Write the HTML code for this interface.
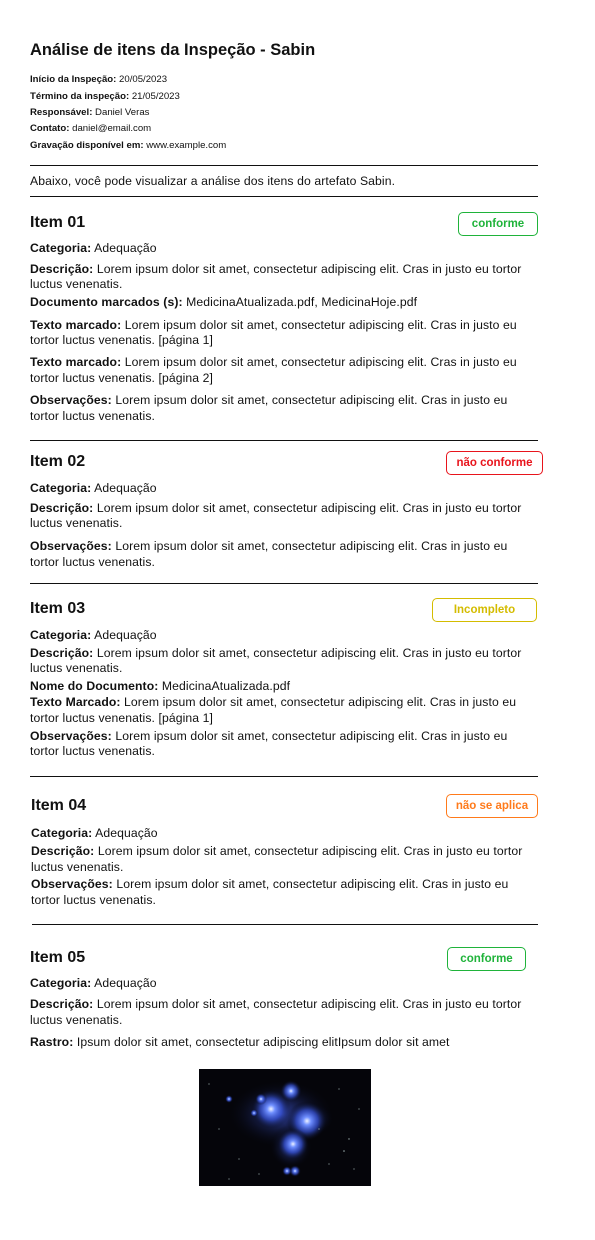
<!DOCTYPE html>
<html><head><meta charset="utf-8"><style>
body{margin:0;width:595px;height:1240px;background:#fff;position:relative;font-family:"Liberation Sans",Arial,sans-serif;color:#111;overflow:hidden}
.l{position:absolute;left:30px;white-space:nowrap;font-size:12.2px;line-height:16px;letter-spacing:0.1px}
.m{position:absolute;left:30px;white-space:nowrap;font-size:9.6px;line-height:14px}
.h{position:absolute;left:30px;font-size:16px;font-weight:bold;line-height:20px}
.t{position:absolute;left:30px;font-size:16.5px;font-weight:bold;line-height:22px}
.hr{position:absolute;left:30px;width:508px;height:1px;background:#111}
.b{position:absolute;border:1px solid;border-radius:5px;font-weight:bold;font-size:11.5px;display:flex;align-items:center;justify-content:center;box-sizing:border-box}
</style></head><body>
<div class="t" style="top:39px">Análise de itens da Inspeção - Sabin</div>
<div class="m" style="top:73px"><b>Início da Inspeção:</b> 20/05/2023</div>
<div class="m" style="top:90px"><b>Término da inspeção:</b> 21/05/2023</div>
<div class="m" style="top:106px"><b>Responsável:</b> Daniel Veras</div>
<div class="m" style="top:122px"><b>Contato:</b> daniel@email.com</div>
<div class="m" style="top:139px"><b>Gravação disponível em:</b> www.example.com</div>
<div class="hr" style="top:165px"></div>
<div class="l" style="top:173px">Abaixo, você pode visualizar a análise dos itens do artefato Sabin.</div>
<div class="hr" style="top:196px"></div>

<div class="h" style="top:213px">Item 01</div>
<div class="b" style="left:458px;top:212px;width:80px;height:24px;color:#1fb33a;border-color:#1fb33a">conforme</div>
<div class="l" style="top:240px"><b>Categoria:</b> Adequação</div>
<div class="l" style="top:261px"><b>Descrição:</b> Lorem ipsum dolor sit amet, consectetur adipiscing elit. Cras in justo eu tortor</div>
<div class="l" style="top:276px">luctus venenatis.</div>
<div class="l" style="top:294px"><b>Documento marcados (s):</b> MedicinaAtualizada.pdf, MedicinaHoje.pdf</div>
<div class="l" style="top:317px"><b>Texto marcado:</b> Lorem ipsum dolor sit amet, consectetur adipiscing elit. Cras in justo eu</div>
<div class="l" style="top:332px">tortor luctus venenatis. [página 1]</div>
<div class="l" style="top:354px"><b>Texto marcado:</b> Lorem ipsum dolor sit amet, consectetur adipiscing elit. Cras in justo eu</div>
<div class="l" style="top:370px">tortor luctus venenatis. [página 2]</div>
<div class="l" style="top:392px"><b>Observações:</b> Lorem ipsum dolor sit amet, consectetur adipiscing elit. Cras in justo eu</div>
<div class="l" style="top:408px">tortor luctus venenatis.</div>
<div class="hr" style="top:440px"></div>

<div class="h" style="top:452px">Item 02</div>
<div class="b" style="left:446px;top:451px;width:97px;height:24px;color:#e8141c;border-color:#e8141c">não conforme</div>
<div class="l" style="top:480px"><b>Categoria:</b> Adequação</div>
<div class="l" style="top:500px"><b>Descrição:</b> Lorem ipsum dolor sit amet, consectetur adipiscing elit. Cras in justo eu tortor</div>
<div class="l" style="top:515px">luctus venenatis.</div>
<div class="l" style="top:538px"><b>Observações:</b> Lorem ipsum dolor sit amet, consectetur adipiscing elit. Cras in justo eu</div>
<div class="l" style="top:554px">tortor luctus venenatis.</div>
<div class="hr" style="top:583px"></div>

<div class="h" style="top:599px">Item 03</div>
<div class="b" style="left:432px;top:598px;width:105px;height:24px;color:#d4bc00;border-color:#d4bc00">Incompleto</div>
<div class="l" style="top:627px"><b>Categoria:</b> Adequação</div>
<div class="l" style="top:645px"><b>Descrição:</b> Lorem ipsum dolor sit amet, consectetur adipiscing elit. Cras in justo eu tortor</div>
<div class="l" style="top:660px">luctus venenatis.</div>
<div class="l" style="top:678px"><b>Nome do Documento:</b> MedicinaAtualizada.pdf</div>
<div class="l" style="top:694px"><b>Texto Marcado:</b> Lorem ipsum dolor sit amet, consectetur adipiscing elit. Cras in justo eu</div>
<div class="l" style="top:710px">tortor luctus venenatis. [página 1]</div>
<div class="l" style="top:728px"><b>Observações:</b> Lorem ipsum dolor sit amet, consectetur adipiscing elit. Cras in justo eu</div>
<div class="l" style="top:743px">tortor luctus venenatis.</div>
<div class="hr" style="top:776px"></div>

<div class="h" style="top:796px;left:31px">Item 04</div>
<div class="b" style="left:446px;top:794px;width:92px;height:24px;color:#ff7a1a;border-color:#ff7a1a">não se aplica</div>
<div class="l" style="top:825px;left:31px"><b>Categoria:</b> Adequação</div>
<div class="l" style="top:843px;left:31px"><b>Descrição:</b> Lorem ipsum dolor sit amet, consectetur adipiscing elit. Cras in justo eu tortor</div>
<div class="l" style="top:859px;left:31px">luctus venenatis.</div>
<div class="l" style="top:876px;left:31px"><b>Observações:</b> Lorem ipsum dolor sit amet, consectetur adipiscing elit. Cras in justo eu</div>
<div class="l" style="top:892px;left:31px">tortor luctus venenatis.</div>
<div class="hr" style="top:924px;left:32px;width:506px"></div>

<div class="h" style="top:948px">Item 05</div>
<div class="b" style="left:447px;top:947px;width:79px;height:24px;color:#1fb33a;border-color:#1fb33a">conforme</div>
<div class="l" style="top:975px"><b>Categoria:</b> Adequação</div>
<div class="l" style="top:996px"><b>Descrição:</b> Lorem ipsum dolor sit amet, consectetur adipiscing elit. Cras in justo eu tortor</div>
<div class="l" style="top:1012px">luctus venenatis.</div>
<div class="l" style="top:1034px"><b>Rastro:</b> Ipsum dolor sit amet, consectetur adipiscing elitIpsum dolor sit amet</div>

<svg style="position:absolute;left:199px;top:1069px" width="172" height="117" viewBox="0 0 172 117">
<defs>
<radialGradient id="g"><stop offset="0" stop-color="#eef2ff"/><stop offset="0.2" stop-color="#7090ff"/><stop offset="0.55" stop-color="#3550d0" stop-opacity="0.7"/><stop offset="1" stop-color="#000" stop-opacity="0"/></radialGradient>
<radialGradient id="n"><stop offset="0" stop-color="#3a50c8" stop-opacity="0.9"/><stop offset="1" stop-color="#000" stop-opacity="0"/></radialGradient>
</defs>
<rect width="172" height="117" fill="#05050a"/>
<ellipse cx="82" cy="45" rx="55" ry="35" fill="url(#n)"/>
<ellipse cx="92" cy="78" rx="22" ry="22" fill="url(#n)"/>
<ellipse cx="110" cy="50" rx="25" ry="18" fill="url(#n)"/>
<circle cx="72" cy="40" r="20" fill="url(#g)"/>
<circle cx="108" cy="52" r="20" fill="url(#g)"/>
<circle cx="92" cy="22" r="11" fill="url(#g)"/>
<circle cx="94" cy="75" r="16" fill="url(#g)"/>
<circle cx="62" cy="30" r="6" fill="url(#g)"/>
<circle cx="96" cy="102" r="6" fill="url(#g)"/>
<circle cx="88" cy="102" r="5" fill="url(#g)"/>
<circle cx="30" cy="30" r="4" fill="url(#g)"/>
<circle cx="55" cy="44" r="4" fill="url(#g)"/>
<g fill="#9aa">
<circle cx="20" cy="60" r=".6"/><circle cx="140" cy="20" r=".6"/><circle cx="150" cy="70" r=".7"/><circle cx="130" cy="95" r=".6"/><circle cx="40" cy="90" r=".6"/><circle cx="160" cy="40" r=".6"/><circle cx="10" cy="15" r=".6"/><circle cx="120" cy="60" r=".6"/><circle cx="60" cy="105" r=".6"/><circle cx="155" cy="100" r=".6"/><circle cx="30" cy="110" r=".6"/><circle cx="145" cy="82" r=".8"/>
</g>
</svg>
</body></html>
